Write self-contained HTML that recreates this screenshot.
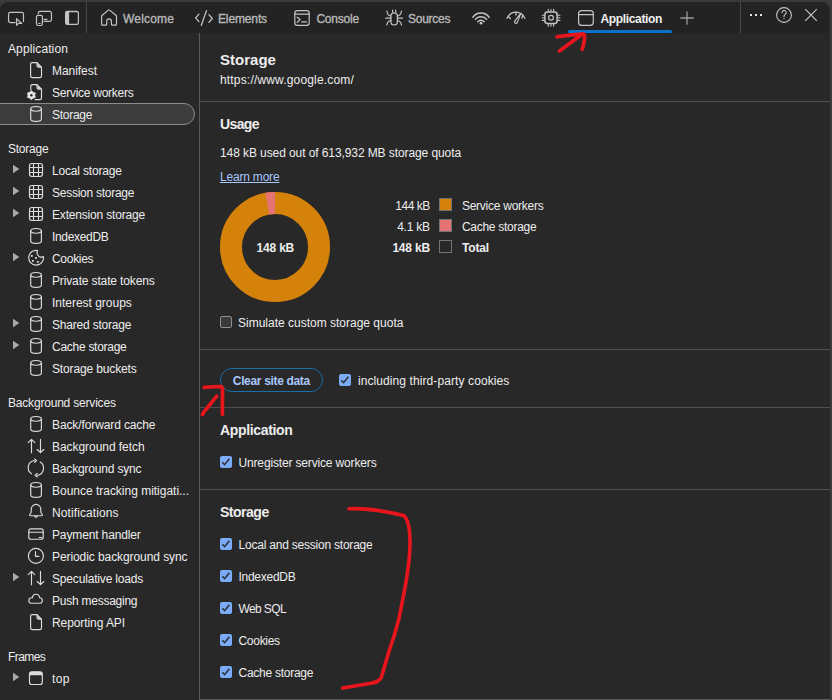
<!DOCTYPE html>
<html><head><meta charset="utf-8">
<style>
*{margin:0;padding:0;box-sizing:border-box}
html,body{width:832px;height:700px;overflow:hidden;background:#3b3b3b;font-family:"Liberation Sans",sans-serif;font-size:12px;color:#ededed}
.a{position:absolute}
#tb{position:absolute;left:0;top:2px;width:830px;height:31px;background:#232323;border-radius:8px 8px 0 0}
#main{position:absolute;left:0;top:33px;width:830px;height:667px;background:#282828}
.vd{position:absolute;background:#5a5a5a;width:1px}
.hd{position:absolute;background:#4f4f4f;height:1px}
.tab{position:absolute;top:12px;font-size:12px;line-height:14px;white-space:nowrap}
.sh{position:absolute;left:8px;height:22px;line-height:22px;color:#ededed;white-space:nowrap}
.it{position:absolute;left:52px;height:22px;line-height:22px;color:#ededed;white-space:nowrap}
.sx{display:inline}
svg{display:block}
.cb{position:absolute;left:220px;width:12px;height:12px;border-radius:2px;background:#7cacf8}
.cbu{position:absolute;width:12px;height:12px;border-radius:2px;background:#3a3a3a;border:1px solid #8f8f8f}
</style></head><body>
<div id="tb"></div>
<svg class="a" style="left:0;top:0" width="832" height="34" viewBox="0 0 832 34" fill="none" stroke="#c4c4c4" stroke-width="1.2" stroke-linecap="round" stroke-linejoin="round" ><path d="M15 22.55H10.35a1.8 1.8 0 0 1-1.8-1.8V14.2a1.8 1.8 0 0 1 1.8-1.8H21.7a1.8 1.8 0 0 1 1.8 1.8V21.4"/><path d="M16.5 18.6L16.6 25.2L18.6 23.4L21.7 23.5Z"/><path d="M38.25 13.7V13.2a1.8 1.8 0 0 1 1.8-1.8h9.6a1.8 1.8 0 0 1 1.8 1.8v6.35a1.8 1.8 0 0 1-1.8 1.8H44"/><rect x="36.5" y="15.35" width="5.9" height="10.15" rx="1.5"/><path d="M44.2 19.4h2.7M38.6 23.5h1.6"/><path fill="#c4c4c4" stroke="none" fill-rule="evenodd" d="M67.2 10.8h9.6a2.2 2.2 0 0 1 2.2 2.2v9.8a2.2 2.2 0 0 1-2.2 2.2h-9.6a2.2 2.2 0 0 1-2.2-2.2V13a2.2 2.2 0 0 1 2.2-2.2zM69.1 12.2v11.6h7.6a1.1 1.1 0 0 0 1.1-1.1V13.3a1.1 1.1 0 0 0-1.1-1.1z"/><path d="M101.6 16.2V24.2a1 1 0 0 0 1 1h3.1a1 1 0 0 0 1-1V21.2a2.35 2.35 0 0 1 4.7 0V24.2a1 1 0 0 0 1 1h3.1a1 1 0 0 0 1-1V16.2a1 1 0 0 0-.35-.75L109.6 10.1a1 1 0 0 0-1.3 0L101.95 15.45a1 1 0 0 0-.35.75z"/><path d="M198.9 14.1L195.7 17.9L198.9 21.6M208.9 14.6L212.3 18.5L208.9 22.4M206.5 10.6L201.3 25.3" stroke-width="1.3"/><rect x="294.8" y="10.6" width="14.4" height="14.7" rx="2.6"/><path d="M294.8 14.2h14.4"/><path d="M297.3 17.2L300 19.6L297.3 22.2M301.6 21.8H306.6" stroke-width="1.3"/><rect x="390.9" y="12.9" width="6.5" height="12" rx="3.25"/><path d="M392.6 10.1v1.8M395.7 10.1v1.8"/><path d="M390.9 16Q387.5 15.6 386.8 11 M390.9 18.2H385.8 M390.9 20.5Q387.5 21 386.8 25"/><path d="M397.4 16Q400.8 15.6 401.5 11 M397.4 18.2H402.5 M397.4 20.5Q400.8 21 401.5 25"/><path d="M472.9 17.2A10 10 0 0 1 489.1 17.2M475.4 19.4A7.1 7.1 0 0 1 486.6 19.4M477.8 21.7A4.2 4.2 0 0 1 484.2 21.7" stroke-width="1.45"/><circle cx="481" cy="23.2" r="1.4" fill="#c4c4c4" stroke="none"/><path d="M507.1 18.4A9.4 9.4 0 0 1 519.5 12.8M521.4 13.8A9.4 9.4 0 0 1 524.9 18.4" stroke-width="1.3"/><path d="M508.4 16.6L510.4 18.5M515.9 12.2V15.1M522.9 15.4L521.8 18.2" stroke-width="1.3"/><path d="M520.9 13.1L517.3 22.4a1.45 1.45 0 0 1-2.7-1.05z" stroke-width="1.2"/><rect x="544.9" y="11.9" width="12.2" height="11.5" rx="2.4" stroke-width="1.5"/><circle cx="551" cy="17.8" r="2.4" stroke-width="1.2"/><path d="M548.3 9.3v2M551 9.3v2M553.6 9.3v2M548.3 24.2v2.1M551 24.2v2.1M553.6 24.2v2.1M542.3 15.2h1.9M542.3 17.8h1.9M542.3 20.4h1.9M558 15.2h1.9M558 17.8h1.9M558 20.4h1.9" stroke-width="1.1"/><rect x="578.6" y="10.6" width="14.7" height="14.7" rx="3"/><path d="M578.6 14.7h14.7"/><path d="M687 11.4v13.3M680.3 18h13.4" stroke="#9c9c9c" stroke-width="1.3" stroke-linecap="butt"/><circle cx="784" cy="15" r="7.4" stroke-width="1.1"/><path d="M782 12.6a2.1 2.1 0 1 1 3.1 1.8c-.7.4-1.1.8-1.1 1.6v.6" stroke-width="1.1"/><circle cx="784" cy="18.6" r=".7" fill="#c4c4c4" stroke="none"/><path d="M805.2 9.1L816.8 20.9M816.8 9.1L805.2 20.9" stroke-width="1.2" stroke-linecap="butt"/></svg>
<div class="vd" style="left:86px;top:2px;height:31px;background:#474747"></div>
<div class="vd" style="left:740px;top:2px;height:31px;background:#474747"></div>
<div class="a" style="left:750px;top:14px;width:2px;height:2px;background:#e6e6e6"></div>
<div class="a" style="left:755px;top:14px;width:2px;height:2px;background:#e6e6e6"></div>
<div class="a" style="left:760px;top:14px;width:2px;height:2px;background:#e6e6e6"></div>
<div class="tab" style="left:123px;color:#b8b8b8;-webkit-text-stroke:0.35px currentColor;"><span class="sx" style="letter-spacing:0.172px">Welcome</span></div>
<div class="tab" style="left:218px;color:#b8b8b8;-webkit-text-stroke:0.35px currentColor;"><span class="sx" style="letter-spacing:-0.129px">Elements</span></div>
<div class="tab" style="left:316.4px;color:#b8b8b8;-webkit-text-stroke:0.35px currentColor;"><span class="sx" style="letter-spacing:-0.204px">Console</span></div>
<div class="tab" style="left:408px;color:#b8b8b8;-webkit-text-stroke:0.35px currentColor;"><span class="sx" style="letter-spacing:-0.247px">Sources</span></div>
<div class="tab" style="left:600.5px;color:#f0f0f0;font-weight:bold;"><span class="sx" style="letter-spacing:-0.349px">Application</span></div>
<div class="a" style="left:568px;top:30px;width:104px;height:3px;border-radius:1.5px;background:#0b72cc"></div>
<div id="main"></div>
<div class="vd" style="left:199px;top:33px;height:667px"></div>
<div class="sh" style="top:38px"><span class="sx" style="letter-spacing:0.116px">Application</span></div>
<svg class="a" style="left:0;top:60px" width="50" height="22" viewBox="0 0 50 22" fill="none" stroke="#dcdcdc" stroke-width="1.15" stroke-linecap="round" stroke-linejoin="round" ><path d="M32.2 2.6h4.8l4.5 4.5v8.9a1.6 1.6 0 0 1-1.6 1.6h-7.7a1.6 1.6 0 0 1-1.6-1.6V4.2a1.6 1.6 0 0 1 1.6-1.6z"/><path d="M37 2.6v3a1.5 1.5 0 0 0 1.5 1.5h3"/><path d="M37.5 3.2l3.5 3.5l-3.2 0z" fill="#dcdcdc" stroke="none"/></svg>
<div class="it" style="top:60px"><span class="sx" style="letter-spacing:-0.045px">Manifest</span></div>
<svg class="a" style="left:0;top:82px" width="50" height="22" viewBox="0 0 50 22" fill="none" stroke="#dcdcdc" stroke-width="1.15" stroke-linecap="round" stroke-linejoin="round" ><path d="M30.8 7.6V4.2a1.6 1.6 0 0 1 1.6-1.6h4.6l4.5 4.5v8.9a1.6 1.6 0 0 1-1.6 1.6h-4.8"/><path d="M37 2.6v3a1.5 1.5 0 0 0 1.5 1.5h3"/><path d="M37.5 3.2l3.5 3.5l-3.2 0z" fill="#dcdcdc" stroke="none"/><path d="M31.40 8.60L33.10 10.26L35.38 10.90L34.80 13.20L35.38 15.50L33.10 16.14L31.40 17.80L29.70 16.14L27.42 15.50L28.00 13.20L27.42 10.90L29.70 10.26Z" fill="#e6e6e6" stroke="#e6e6e6" stroke-width=".6"/><circle cx="31.4" cy="13.2" r="1.2" fill="#282828" stroke="none"/></svg>
<div class="it" style="top:82px"><span class="sx" style="letter-spacing:-0.257px">Service workers</span></div>
<div class="a" style="left:-12px;top:103px;width:207px;height:22px;border-radius:11px;background:#3c3c3c;border:1px solid #8c8c8c"></div>
<svg class="a" style="left:0;top:104px" width="50" height="22" viewBox="0 0 50 22" fill="none" stroke="#dcdcdc" stroke-width="1.15" stroke-linecap="round" stroke-linejoin="round" ><ellipse cx="36.05" cy="4.85" rx="5.35" ry="2.35"/><path d="M30.7 4.85v10.2c0 1.3 2.4 2.35 5.35 2.35s5.35-1.05 5.35-2.35V4.85"/></svg>
<div class="it" style="top:104px"><span class="sx" style="letter-spacing:-0.276px">Storage</span></div>
<div class="sh" style="top:138px"><span class="sx" style="letter-spacing:-0.233px">Storage</span></div>
<svg class="a" style="left:0;top:160px" width="50" height="22" viewBox="0 0 50 22" fill="none" stroke="#dcdcdc" stroke-width="1.15" stroke-linecap="round" stroke-linejoin="round" ><path d="M13 4.8L19.3 9L13 13.2Z" fill="#a8a8a8" stroke="none"/></svg>
<svg class="a" style="left:0;top:160px" width="50" height="22" viewBox="0 0 50 22" fill="none" stroke="#dcdcdc" stroke-width="1.15" stroke-linecap="round" stroke-linejoin="round" ><rect x="29.5" y="3.5" width="13" height="13" rx="2.4"/><path d="M33.5 3.5v13M38.5 3.5v13M29.5 7.5h13M29.5 12.5h13" stroke-linecap="butt"/></svg>
<div class="it" style="top:160px"><span class="sx" style="letter-spacing:-0.181px">Local storage</span></div>
<svg class="a" style="left:0;top:182px" width="50" height="22" viewBox="0 0 50 22" fill="none" stroke="#dcdcdc" stroke-width="1.15" stroke-linecap="round" stroke-linejoin="round" ><path d="M13 4.8L19.3 9L13 13.2Z" fill="#a8a8a8" stroke="none"/></svg>
<svg class="a" style="left:0;top:182px" width="50" height="22" viewBox="0 0 50 22" fill="none" stroke="#dcdcdc" stroke-width="1.15" stroke-linecap="round" stroke-linejoin="round" ><rect x="29.5" y="3.5" width="13" height="13" rx="2.4"/><path d="M33.5 3.5v13M38.5 3.5v13M29.5 7.5h13M29.5 12.5h13" stroke-linecap="butt"/></svg>
<div class="it" style="top:182px"><span class="sx" style="letter-spacing:-0.257px">Session storage</span></div>
<svg class="a" style="left:0;top:204px" width="50" height="22" viewBox="0 0 50 22" fill="none" stroke="#dcdcdc" stroke-width="1.15" stroke-linecap="round" stroke-linejoin="round" ><path d="M13 4.8L19.3 9L13 13.2Z" fill="#a8a8a8" stroke="none"/></svg>
<svg class="a" style="left:0;top:204px" width="50" height="22" viewBox="0 0 50 22" fill="none" stroke="#dcdcdc" stroke-width="1.15" stroke-linecap="round" stroke-linejoin="round" ><rect x="29.5" y="3.5" width="13" height="13" rx="2.4"/><path d="M33.5 3.5v13M38.5 3.5v13M29.5 7.5h13M29.5 12.5h13" stroke-linecap="butt"/></svg>
<div class="it" style="top:204px"><span class="sx" style="letter-spacing:-0.180px">Extension storage</span></div>
<svg class="a" style="left:0;top:226px" width="50" height="22" viewBox="0 0 50 22" fill="none" stroke="#dcdcdc" stroke-width="1.15" stroke-linecap="round" stroke-linejoin="round" ><ellipse cx="36.05" cy="4.85" rx="5.35" ry="2.35"/><path d="M30.7 4.85v10.2c0 1.3 2.4 2.35 5.35 2.35s5.35-1.05 5.35-2.35V4.85"/></svg>
<div class="it" style="top:226px"><span class="sx" style="letter-spacing:-0.319px">IndexedDB</span></div>
<svg class="a" style="left:0;top:248px" width="50" height="22" viewBox="0 0 50 22" fill="none" stroke="#dcdcdc" stroke-width="1.15" stroke-linecap="round" stroke-linejoin="round" ><path d="M13 4.8L19.3 9L13 13.2Z" fill="#a8a8a8" stroke="none"/></svg>
<svg class="a" style="left:0;top:248px" width="50" height="22" viewBox="0 0 50 22" fill="none" stroke="#dcdcdc" stroke-width="1.15" stroke-linecap="round" stroke-linejoin="round" ><path d="M37.6 2.5A7.4 7.4 0 1 0 43.4 8.5L41 9.4Q38.8 9 37.4 6.5Q36.6 4.8 37.6 2.5Z"/><rect x="30.900000000000002" y="7.0" width="1.8" height="1.8" fill="#dcdcdc" stroke="none"/><rect x="35.1" y="9.1" width="1.8" height="1.8" fill="#dcdcdc" stroke="none"/><rect x="32.0" y="12.0" width="1.8" height="1.8" fill="#dcdcdc" stroke="none"/><rect x="36.9" y="13.0" width="1.8" height="1.8" fill="#dcdcdc" stroke="none"/></svg>
<div class="it" style="top:248px"><span class="sx" style="letter-spacing:-0.294px">Cookies</span></div>
<svg class="a" style="left:0;top:270px" width="50" height="22" viewBox="0 0 50 22" fill="none" stroke="#dcdcdc" stroke-width="1.15" stroke-linecap="round" stroke-linejoin="round" ><ellipse cx="36.05" cy="4.85" rx="5.35" ry="2.35"/><path d="M30.7 4.85v10.2c0 1.3 2.4 2.35 5.35 2.35s5.35-1.05 5.35-2.35V4.85"/></svg>
<div class="it" style="top:270px"><span class="sx" style="letter-spacing:-0.140px">Private state tokens</span></div>
<svg class="a" style="left:0;top:292px" width="50" height="22" viewBox="0 0 50 22" fill="none" stroke="#dcdcdc" stroke-width="1.15" stroke-linecap="round" stroke-linejoin="round" ><ellipse cx="36.05" cy="4.85" rx="5.35" ry="2.35"/><path d="M30.7 4.85v10.2c0 1.3 2.4 2.35 5.35 2.35s5.35-1.05 5.35-2.35V4.85"/></svg>
<div class="it" style="top:292px"><span class="sx" style="letter-spacing:-0.016px">Interest groups</span></div>
<svg class="a" style="left:0;top:314px" width="50" height="22" viewBox="0 0 50 22" fill="none" stroke="#dcdcdc" stroke-width="1.15" stroke-linecap="round" stroke-linejoin="round" ><path d="M13 4.8L19.3 9L13 13.2Z" fill="#a8a8a8" stroke="none"/></svg>
<svg class="a" style="left:0;top:314px" width="50" height="22" viewBox="0 0 50 22" fill="none" stroke="#dcdcdc" stroke-width="1.15" stroke-linecap="round" stroke-linejoin="round" ><ellipse cx="36.05" cy="4.85" rx="5.35" ry="2.35"/><path d="M30.7 4.85v10.2c0 1.3 2.4 2.35 5.35 2.35s5.35-1.05 5.35-2.35V4.85"/></svg>
<div class="it" style="top:314px"><span class="sx" style="letter-spacing:-0.197px">Shared storage</span></div>
<svg class="a" style="left:0;top:336px" width="50" height="22" viewBox="0 0 50 22" fill="none" stroke="#dcdcdc" stroke-width="1.15" stroke-linecap="round" stroke-linejoin="round" ><path d="M13 4.8L19.3 9L13 13.2Z" fill="#a8a8a8" stroke="none"/></svg>
<svg class="a" style="left:0;top:336px" width="50" height="22" viewBox="0 0 50 22" fill="none" stroke="#dcdcdc" stroke-width="1.15" stroke-linecap="round" stroke-linejoin="round" ><ellipse cx="36.05" cy="4.85" rx="5.35" ry="2.35"/><path d="M30.7 4.85v10.2c0 1.3 2.4 2.35 5.35 2.35s5.35-1.05 5.35-2.35V4.85"/></svg>
<div class="it" style="top:336px"><span class="sx" style="letter-spacing:-0.273px">Cache storage</span></div>
<svg class="a" style="left:0;top:358px" width="50" height="22" viewBox="0 0 50 22" fill="none" stroke="#dcdcdc" stroke-width="1.15" stroke-linecap="round" stroke-linejoin="round" ><ellipse cx="36.05" cy="4.85" rx="5.35" ry="2.35"/><path d="M30.7 4.85v10.2c0 1.3 2.4 2.35 5.35 2.35s5.35-1.05 5.35-2.35V4.85"/></svg>
<div class="it" style="top:358px"><span class="sx" style="letter-spacing:-0.141px">Storage buckets</span></div>
<div class="sh" style="top:392px"><span class="sx" style="letter-spacing:-0.194px">Background services</span></div>
<svg class="a" style="left:0;top:414px" width="50" height="22" viewBox="0 0 50 22" fill="none" stroke="#dcdcdc" stroke-width="1.15" stroke-linecap="round" stroke-linejoin="round" ><ellipse cx="36.05" cy="4.85" rx="5.35" ry="2.35"/><path d="M30.7 4.85v10.2c0 1.3 2.4 2.35 5.35 2.35s5.35-1.05 5.35-2.35V4.85"/></svg>
<div class="it" style="top:414px"><span class="sx" style="letter-spacing:-0.111px">Back/forward cache</span></div>
<svg class="a" style="left:0;top:436px" width="50" height="22" viewBox="0 0 50 22" fill="none" stroke="#dcdcdc" stroke-width="1.15" stroke-linecap="round" stroke-linejoin="round" ><path d="M31.5 3.4v13.3M28.2 6.6l3.3-3.2 3.3 3.2M40.5 3.4v13.3M37.2 13.5l3.3 3.2 3.3-3.2"/></svg>
<div class="it" style="top:436px"><span class="sx" style="letter-spacing:-0.050px">Background fetch</span></div>
<svg class="a" style="left:0;top:458px" width="50" height="22" viewBox="0 0 50 22" fill="none" stroke="#dcdcdc" stroke-width="1.15" stroke-linecap="round" stroke-linejoin="round" ><path d="M34.2 2.5A7.3 7.3 0 0 0 31.5 15.8M37.5 17.4A7.3 7.3 0 0 0 40.2 4.1"/><path d="M34.5 0.9L36.6 2.5L34.6 4.3M37.2 15.5L35.1 17.3L37.3 19" /></svg>
<div class="it" style="top:458px"><span class="sx" style="letter-spacing:-0.177px">Background sync</span></div>
<svg class="a" style="left:0;top:480px" width="50" height="22" viewBox="0 0 50 22" fill="none" stroke="#dcdcdc" stroke-width="1.15" stroke-linecap="round" stroke-linejoin="round" ><ellipse cx="36.05" cy="4.85" rx="5.35" ry="2.35"/><path d="M30.7 4.85v10.2c0 1.3 2.4 2.35 5.35 2.35s5.35-1.05 5.35-2.35V4.85"/></svg>
<div class="it" style="top:480px"><span class="sx" style="letter-spacing:-0.015px">Bounce tracking mitigati...</span></div>
<svg class="a" style="left:0;top:502px" width="50" height="22" viewBox="0 0 50 22" fill="none" stroke="#dcdcdc" stroke-width="1.15" stroke-linecap="round" stroke-linejoin="round" ><path d="M31.2 10.3V7.2a4.8 4.8 0 0 1 9.6 0v3.1l1.5 2.3a.7.7 0 0 1-.6 1.1H30.3a.7.7 0 0 1-.6-1.1z"/><path d="M34.6 14.2a1.5 1.5 0 0 0 2.8 0"/></svg>
<div class="it" style="top:502px"><span class="sx" style="letter-spacing:0.094px">Notifications</span></div>
<svg class="a" style="left:0;top:524px" width="50" height="22" viewBox="0 0 50 22" fill="none" stroke="#dcdcdc" stroke-width="1.15" stroke-linecap="round" stroke-linejoin="round" ><rect x="28.8" y="4.9" width="14.4" height="10.3" rx="2"/><path d="M28.8 8.2h14.4M39.2 13.5h2.4"/></svg>
<div class="it" style="top:524px"><span class="sx" style="letter-spacing:-0.136px">Payment handler</span></div>
<svg class="a" style="left:0;top:546px" width="50" height="22" viewBox="0 0 50 22" fill="none" stroke="#dcdcdc" stroke-width="1.15" stroke-linecap="round" stroke-linejoin="round" ><circle cx="35.9" cy="9.9" r="7.5"/><path d="M35.5 5.5v4.9h3.4"/></svg>
<div class="it" style="top:546px"><span class="sx" style="letter-spacing:-0.080px">Periodic background sync</span></div>
<svg class="a" style="left:0;top:568px" width="50" height="22" viewBox="0 0 50 22" fill="none" stroke="#dcdcdc" stroke-width="1.15" stroke-linecap="round" stroke-linejoin="round" ><path d="M13 4.8L19.3 9L13 13.2Z" fill="#a8a8a8" stroke="none"/></svg>
<svg class="a" style="left:0;top:568px" width="50" height="22" viewBox="0 0 50 22" fill="none" stroke="#dcdcdc" stroke-width="1.15" stroke-linecap="round" stroke-linejoin="round" ><path d="M31.5 3.4v13.3M28.2 6.6l3.3-3.2 3.3 3.2M40.5 3.4v13.3M37.2 13.5l3.3 3.2 3.3-3.2"/></svg>
<div class="it" style="top:568px"><span class="sx" style="letter-spacing:-0.168px">Speculative loads</span></div>
<svg class="a" style="left:0;top:590px" width="50" height="22" viewBox="0 0 50 22" fill="none" stroke="#dcdcdc" stroke-width="1.15" stroke-linecap="round" stroke-linejoin="round" ><path d="M32.5 7.7a3.5 3.5 0 0 1 7 0a2.8 2.8 0 0 1 .8 5.5a1.5 1.5 0 0 1-.5.1h-8.4a1.5 1.5 0 0 1-.5-.1a2.8 2.8 0 0 1 .8-5.5z" stroke-width="1.1"/></svg>
<div class="it" style="top:590px"><span class="sx" style="letter-spacing:-0.244px">Push messaging</span></div>
<svg class="a" style="left:0;top:612px" width="50" height="22" viewBox="0 0 50 22" fill="none" stroke="#dcdcdc" stroke-width="1.15" stroke-linecap="round" stroke-linejoin="round" ><path d="M32.2 2.6h4.8l4.5 4.5v8.9a1.6 1.6 0 0 1-1.6 1.6h-7.7a1.6 1.6 0 0 1-1.6-1.6V4.2a1.6 1.6 0 0 1 1.6-1.6z"/><path d="M37 2.6v3a1.5 1.5 0 0 0 1.5 1.5h3"/><path d="M37.5 3.2l3.5 3.5l-3.2 0z" fill="#dcdcdc" stroke="none"/></svg>
<div class="it" style="top:612px"><span class="sx" style="letter-spacing:-0.081px">Reporting API</span></div>
<div class="sh" style="top:646px"><span class="sx" style="letter-spacing:-0.562px">Frames</span></div>
<svg class="a" style="left:0;top:668px" width="50" height="22" viewBox="0 0 50 22" fill="none" stroke="#dcdcdc" stroke-width="1.15" stroke-linecap="round" stroke-linejoin="round" ><path d="M13 4.8L19.3 9L13 13.2Z" fill="#a8a8a8" stroke="none"/></svg>
<svg class="a" style="left:0;top:668px" width="50" height="22" viewBox="0 0 50 22" fill="none" stroke="#dcdcdc" stroke-width="1.15" stroke-linecap="round" stroke-linejoin="round" ><rect x="29.5" y="3.7" width="12.8" height="12.8" rx="2.3"/><path d="M29.5 7.2V6a2.3 2.3 0 0 1 2.3-2.3h8.2a2.3 2.3 0 0 1 2.3 2.3v1.2z" fill="#dcdcdc" stroke="none"/></svg>
<div class="it" style="top:668px"><span class="sx" style="letter-spacing:0.337px">top</span></div>
<div class="a" style="left:220px;top:51px;line-height:17px;font-size:15px;font-weight:bold;white-space:nowrap;"><span class="sx" style="letter-spacing:0.020px">Storage</span></div>
<div class="a" style="left:220px;top:73px;line-height:14px;font-size:12px;white-space:nowrap;"><span class="sx" style="letter-spacing:0.171px">https://www.google.com/</span></div>
<div class="hd" style="left:200px;top:101px;width:630px"></div>
<div class="a" style="left:220px;top:116px;line-height:16px;font-size:14px;font-weight:bold;white-space:nowrap;"><span class="sx" style="letter-spacing:-0.606px">Usage</span></div>
<div class="a" style="left:220px;top:146px;line-height:14px;font-size:12px;white-space:nowrap;"><span class="sx" style="letter-spacing:-0.089px">148 kB used out of 613,932 MB storage quota</span></div>
<div class="a" style="left:220px;top:170px;line-height:14px;font-size:12px;white-space:nowrap;color:#a8c7fa;text-decoration:underline"><span class="sx" style="letter-spacing:-0.198px">Learn more</span></div>
<svg class="a" style="left:215px;top:187px" width="120" height="120" viewBox="0 0 120 120"><circle cx="60" cy="60" r="44.0" fill="none" stroke="#d4820a" stroke-width="22"/><circle cx="60" cy="60" r="44.0" fill="none" stroke="#e57373" stroke-width="22" stroke-dasharray="7.65 276.46" transform="rotate(-99.97 60 60)"/></svg>
<div class="a" style="left:256.6px;top:241px;line-height:14px;font-size:12px;font-weight:bold;white-space:nowrap;"><span class="sx" style="letter-spacing:-0.201px">148 kB</span></div>
<div class="a" style="left:395.29999999999995px;top:199px;line-height:14px;font-size:12px;white-space:nowrap;"><span class="sx" style="letter-spacing:-0.460px">144 kB</span></div>
<div class="a" style="left:439px;top:198px;width:13px;height:13px;background:#d4820a;border:1px solid #737373"></div>
<div class="a" style="left:461.9px;top:199px;line-height:14px;font-size:12px;white-space:nowrap;"><span class="sx" style="letter-spacing:-0.251px">Service workers</span></div>
<div class="a" style="left:397.15224839400423px;top:220px;line-height:14px;font-size:12px;white-space:nowrap;"><span class="sx" style="letter-spacing:-0.214px">4.1 kB</span></div>
<div class="a" style="left:439px;top:219px;width:13px;height:13px;background:#e57373;border:1px solid #737373"></div>
<div class="a" style="left:461.9px;top:220px;line-height:14px;font-size:12px;white-space:nowrap;"><span class="sx" style="letter-spacing:-0.273px">Cache storage</span></div>
<div class="a" style="left:392.4px;top:241px;line-height:14px;font-size:12px;font-weight:bold;white-space:nowrap;"><span class="sx" style="letter-spacing:-0.201px">148 kB</span></div>
<div class="a" style="left:439px;top:240px;width:13px;height:13px;background:transparent;border:1px solid #737373"></div>
<div class="a" style="left:461.9px;top:241px;line-height:14px;font-size:12px;font-weight:bold;white-space:nowrap;"><span class="sx" style="letter-spacing:-0.136px">Total</span></div>
<div class="cbu" style="left:220px;top:316px"></div>
<div class="a" style="left:238px;top:316px;line-height:14px;font-size:12px;white-space:nowrap;"><span class="sx" style="letter-spacing:-0.001px">Simulate custom storage quota</span></div>
<div class="hd" style="left:200px;top:349px;width:630px"></div>
<div class="a" style="left:220px;top:368px;width:103px;height:24px;border:1px solid #1b6ea6;border-radius:12px"></div>
<div class="a" style="left:232.8px;top:374px;line-height:14px;font-size:12px;font-weight:bold;white-space:nowrap;color:#a8c7fa"><span class="sx" style="letter-spacing:-0.336px">Clear site data</span></div>
<div class="cb" style="left:339px;top:374px"><svg width="12" height="12" viewBox="0 0 12 12"><path d="M2.3 6.3L4.6 8.7L9.4 2.8" fill="none" stroke="#2b2b2b" stroke-width="1.45"/></svg></div>
<div class="a" style="left:357.9px;top:374px;line-height:14px;font-size:12px;white-space:nowrap;"><span class="sx" style="letter-spacing:0.095px">including third-party cookies</span></div>
<div class="hd" style="left:200px;top:407px;width:630px"></div>
<div class="a" style="left:220px;top:422px;line-height:16px;font-size:14px;font-weight:bold;white-space:nowrap;"><span class="sx" style="letter-spacing:-0.339px">Application</span></div>
<div class="cb" style="top:456px"><svg width="12" height="12" viewBox="0 0 12 12"><path d="M2.3 6.3L4.6 8.7L9.4 2.8" fill="none" stroke="#2b2b2b" stroke-width="1.45"/></svg></div>
<div class="a" style="left:238.5px;top:456px;line-height:14px;font-size:12px;white-space:nowrap;"><span class="sx" style="letter-spacing:-0.156px">Unregister service workers</span></div>
<div class="hd" style="left:200px;top:489px;width:630px"></div>
<div class="a" style="left:220px;top:504px;line-height:16px;font-size:14px;font-weight:bold;white-space:nowrap;"><span class="sx" style="letter-spacing:-0.489px">Storage</span></div>
<div class="cb" style="top:538px"><svg width="12" height="12" viewBox="0 0 12 12"><path d="M2.3 6.3L4.6 8.7L9.4 2.8" fill="none" stroke="#2b2b2b" stroke-width="1.45"/></svg></div>
<div class="a" style="left:238.5px;top:538px;line-height:14px;font-size:12px;white-space:nowrap;"><span class="sx" style="letter-spacing:-0.217px">Local and session storage</span></div>
<div class="cb" style="top:570px"><svg width="12" height="12" viewBox="0 0 12 12"><path d="M2.3 6.3L4.6 8.7L9.4 2.8" fill="none" stroke="#2b2b2b" stroke-width="1.45"/></svg></div>
<div class="a" style="left:238.5px;top:570px;line-height:14px;font-size:12px;white-space:nowrap;"><span class="sx" style="letter-spacing:-0.275px">IndexedDB</span></div>
<div class="cb" style="top:602px"><svg width="12" height="12" viewBox="0 0 12 12"><path d="M2.3 6.3L4.6 8.7L9.4 2.8" fill="none" stroke="#2b2b2b" stroke-width="1.45"/></svg></div>
<div class="a" style="left:238.5px;top:602px;line-height:14px;font-size:12px;white-space:nowrap;"><span class="sx" style="letter-spacing:-0.616px">Web SQL</span></div>
<div class="cb" style="top:634px"><svg width="12" height="12" viewBox="0 0 12 12"><path d="M2.3 6.3L4.6 8.7L9.4 2.8" fill="none" stroke="#2b2b2b" stroke-width="1.45"/></svg></div>
<div class="a" style="left:238.5px;top:634px;line-height:14px;font-size:12px;white-space:nowrap;"><span class="sx" style="letter-spacing:-0.294px">Cookies</span></div>
<div class="cb" style="top:666px"><svg width="12" height="12" viewBox="0 0 12 12"><path d="M2.3 6.3L4.6 8.7L9.4 2.8" fill="none" stroke="#2b2b2b" stroke-width="1.45"/></svg></div>
<div class="a" style="left:238.5px;top:666px;line-height:14px;font-size:12px;white-space:nowrap;"><span class="sx" style="letter-spacing:-0.257px">Cache storage</span></div>
<div class="hd" style="left:200px;top:699px;width:630px;background:#5a5a5a"></div>
<svg class="a" style="left:0;top:0" width="832" height="700" viewBox="0 0 832 700" fill="none" stroke="#e8161c" stroke-width="3.7" stroke-linecap="round" stroke-linejoin="round"><path d="M557 36.8Q570 34.6 583.6 33.8Q584.8 35 584.6 38Q584 44 582.2 49.3"/><path d="M559.5 51L580.5 35.4"/><path d="M204.2 387.4Q214 386.6 221.4 386.5Q222.6 387.2 222.5 390L222.4 414.2"/><path d="M202.4 414.6Q203.5 412 206 409.5L216.7 396.2"/><path d="M349 508.8C365 508 385 511 403.5 515.4Q409.5 520 410 540C410.4 565 403.5 596 398.6 620Q394.5 636 389.4 650L381.4 677Q379.5 682 371 683.2L342.6 688.1" stroke-width="3.6"/></svg>
</body></html>
